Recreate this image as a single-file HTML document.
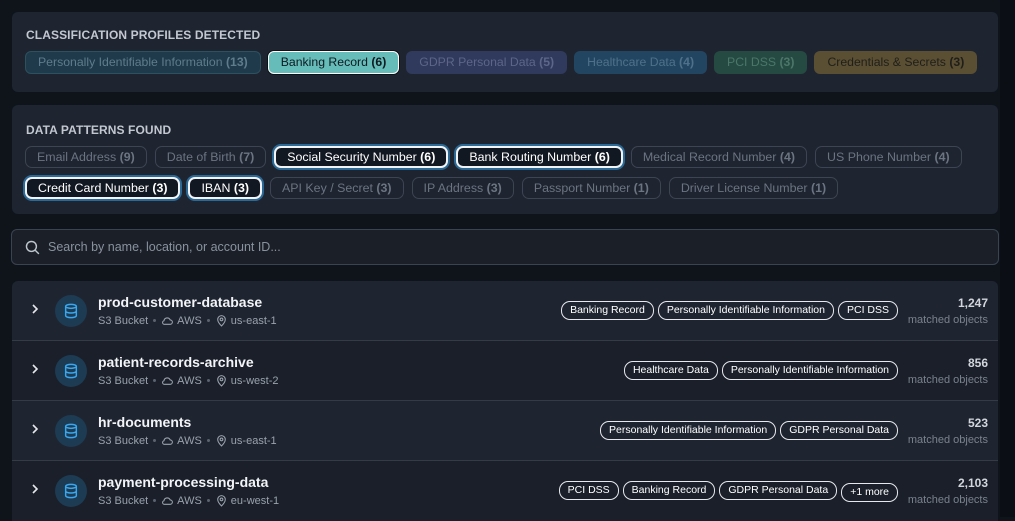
<!DOCTYPE html>
<html><head><meta charset="utf-8"><style>
*{box-sizing:border-box;margin:0;padding:0}
body{width:1015px;height:517px;overflow:hidden;background:#0f141b;font-family:"Liberation Sans",sans-serif;position:relative}
.rstrip{position:absolute;left:1000px;top:0;width:15px;height:517px;background:#0b0f15}
.panel{position:absolute;left:12px;width:986px;background:#1e2430;border-radius:6px}
.h{position:absolute;left:14px;font-size:12px;font-weight:bold;color:#c3c8d0;letter-spacing:.1px}
.chips{position:absolute;left:13px;display:flex;gap:7px;flex-wrap:wrap}
.c{height:23px;line-height:21px;padding:0 12px;border-radius:6px;font-size:12.25px;border:1px solid transparent;white-space:nowrap}
.c b{font-weight:bold}
.p{height:22px;line-height:20px;padding:0 11px;border-radius:7px;font-size:12.4px;border:1px solid #3d4452;color:#6c7482;white-space:nowrap}
.p.s{border:2px solid #f2f4f7;box-shadow:0 0 0 2px #2b6a96;background:#121821;color:#fff;line-height:18px}
.search{position:absolute;left:11px;top:229px;width:988px;height:36px;border:1px solid #3b4350;border-radius:6px;background:#1a1f28}
.search span{position:absolute;left:36px;top:10px;font-size:12.5px;color:#8a929e}
.row{position:absolute;left:12px;width:986px;height:60px;border-bottom:1px solid #343b47}
.chev{position:absolute;left:17px;top:22px}
.ic{position:absolute;left:43px;top:14px;width:32px;height:32px;border-radius:50%;background:#1d3b53}
.ic svg{position:absolute;left:8px;top:8px}
.nm{position:absolute;left:86px;top:13px;font-size:14px;font-weight:bold;color:#f2f4f7}
.mt{position:absolute;left:86px;top:33px;font-size:11px;color:#9aa2ad;display:flex;align-items:center;gap:3px}
.dot{width:3px;height:3px;background:#5b6370;border-radius:50%;margin:0 2px}
.tags{position:absolute;right:100px;top:20px;display:flex;gap:4px}
.t{height:19px;line-height:17px;padding:0 8px;border:1px solid #e6e8ec;border-radius:9px;color:#fff;font-size:10.5px;white-space:nowrap}
.cnt{position:absolute;right:10px;top:15px;text-align:right}
.cnt b{display:block;font-size:12px;color:#d2d6dc}
.cnt span{font-size:11px;color:#7a828e}
</style></head><body>
<div class="rstrip"></div>
<div class="panel" style="top:12px;height:80px">
 <div class="h" style="top:16px">CLASSIFICATION PROFILES DETECTED</div>
 <div class="chips" style="top:39px">
  <div class="c" style="background:#1f3a4b;border-color:#2c5160;color:#5e7c8c">Personally Identifiable Information <b>(13)</b></div>
  <div class="c" style="background:#66bcb8;border-color:#ffffff;color:#0f1a22;box-shadow:0 0 0 1px #0d1218">Banking Record <b>(6)</b></div>
  <div class="c" style="background:#2f3a5c;color:#5d6688">GDPR Personal Data <b>(5)</b></div>
  <div class="c" style="background:#224661;color:#50708a">Healthcare Data <b>(4)</b></div>
  <div class="c" style="background:#244a42;color:#4d7669">PCI DSS <b>(3)</b></div>
  <div class="c" style="background:#5a4e33;color:#1f1f1a">Credentials &amp; Secrets <b>(3)</b></div>
 </div>
</div>
<div class="panel" style="top:105px;height:109px">
 <div class="h" style="top:18px">DATA PATTERNS FOUND</div>
 <div class="chips" style="top:41px;width:960px;gap:9px 8px">
  <div class="p">Email Address <b>(9)</b></div>
  <div class="p">Date of Birth <b>(7)</b></div>
  <div class="p s">Social Security Number <b>(6)</b></div>
  <div class="p s">Bank Routing Number <b>(6)</b></div>
  <div class="p">Medical Record Number <b>(4)</b></div>
  <div class="p">US Phone Number <b>(4)</b></div>
  <div class="p s">Credit Card Number <b>(3)</b></div>
  <div class="p s">IBAN <b>(3)</b></div>
  <div class="p">API Key / Secret <b>(3)</b></div>
  <div class="p">IP Address <b>(3)</b></div>
  <div class="p">Passport Number <b>(1)</b></div>
  <div class="p">Driver License Number <b>(1)</b></div>
 </div>
</div>
<div class="search"><svg style="position:absolute;left:12px;top:9px" width="17" height="17" viewBox="0 0 24 24" fill="none" stroke="#c0c6ce" stroke-width="2"><circle cx="10.5" cy="10.5" r="7"/><path d="M16 16l5 5"/></svg><span>Search by name, location, or account ID...</span></div>

<div class="row" style="top:281px;background:#1f2530;border-radius:6px 6px 0 0"><svg class="chev" width="12" height="12" viewBox="0 0 12 12"><path d="M4 2l4 4-4 4" stroke="#e6e8ec" stroke-width="1.6" fill="none"/></svg><div class="ic"><svg width="16" height="16" viewBox="0 0 24 24" fill="none" stroke="#3aa8f0" stroke-width="2.2"><ellipse cx="12" cy="5" rx="8" ry="3"/><path d="M4 5v14c0 1.7 3.6 3 8 3s8-1.3 8-3V5M4 12c0 1.7 3.6 3 8 3s8-1.3 8-3"/></svg></div><div class="nm">prod-customer-database</div><div class="mt">S3 Bucket<i class="dot"></i><svg width="13" height="13" viewBox="0 0 24 24" fill="none" stroke="#9aa2ad" stroke-width="2"><path d="M7 19h10a4 4 0 0 0 0-8 6 6 0 0 0-11.5 1.5A3.3 3.3 0 0 0 7 19z"/></svg>AWS<i class="dot"></i><svg width="13" height="13" viewBox="0 0 24 24" fill="none" stroke="#9aa2ad" stroke-width="2"><path d="M12 22s7-6.5 7-12a7 7 0 0 0-14 0c0 5.5 7 12 7 12z"/><circle cx="12" cy="10" r="2.5"/></svg>us-east-1</div><div class="tags"><span class="t">Banking Record</span><span class="t">Personally Identifiable Information</span><span class="t">PCI DSS</span></div><div class="cnt"><b>1,247</b><span>matched objects</span></div></div>

<div class="row" style="top:341px;background:#1a1f29"><svg class="chev" width="12" height="12" viewBox="0 0 12 12"><path d="M4 2l4 4-4 4" stroke="#e6e8ec" stroke-width="1.6" fill="none"/></svg><div class="ic"><svg width="16" height="16" viewBox="0 0 24 24" fill="none" stroke="#3aa8f0" stroke-width="2.2"><ellipse cx="12" cy="5" rx="8" ry="3"/><path d="M4 5v14c0 1.7 3.6 3 8 3s8-1.3 8-3V5M4 12c0 1.7 3.6 3 8 3s8-1.3 8-3"/></svg></div><div class="nm">patient-records-archive</div><div class="mt">S3 Bucket<i class="dot"></i><svg width="13" height="13" viewBox="0 0 24 24" fill="none" stroke="#9aa2ad" stroke-width="2"><path d="M7 19h10a4 4 0 0 0 0-8 6 6 0 0 0-11.5 1.5A3.3 3.3 0 0 0 7 19z"/></svg>AWS<i class="dot"></i><svg width="13" height="13" viewBox="0 0 24 24" fill="none" stroke="#9aa2ad" stroke-width="2"><path d="M12 22s7-6.5 7-12a7 7 0 0 0-14 0c0 5.5 7 12 7 12z"/><circle cx="12" cy="10" r="2.5"/></svg>us-west-2</div><div class="tags"><span class="t">Healthcare Data</span><span class="t">Personally Identifiable Information</span></div><div class="cnt"><b>856</b><span>matched objects</span></div></div>

<div class="row" style="top:401px;background:#1f2530"><svg class="chev" width="12" height="12" viewBox="0 0 12 12"><path d="M4 2l4 4-4 4" stroke="#e6e8ec" stroke-width="1.6" fill="none"/></svg><div class="ic"><svg width="16" height="16" viewBox="0 0 24 24" fill="none" stroke="#3aa8f0" stroke-width="2.2"><ellipse cx="12" cy="5" rx="8" ry="3"/><path d="M4 5v14c0 1.7 3.6 3 8 3s8-1.3 8-3V5M4 12c0 1.7 3.6 3 8 3s8-1.3 8-3"/></svg></div><div class="nm">hr-documents</div><div class="mt">S3 Bucket<i class="dot"></i><svg width="13" height="13" viewBox="0 0 24 24" fill="none" stroke="#9aa2ad" stroke-width="2"><path d="M7 19h10a4 4 0 0 0 0-8 6 6 0 0 0-11.5 1.5A3.3 3.3 0 0 0 7 19z"/></svg>AWS<i class="dot"></i><svg width="13" height="13" viewBox="0 0 24 24" fill="none" stroke="#9aa2ad" stroke-width="2"><path d="M12 22s7-6.5 7-12a7 7 0 0 0-14 0c0 5.5 7 12 7 12z"/><circle cx="12" cy="10" r="2.5"/></svg>us-east-1</div><div class="tags"><span class="t">Personally Identifiable Information</span><span class="t">GDPR Personal Data</span></div><div class="cnt"><b>523</b><span>matched objects</span></div></div>

<div class="row" style="top:461px;background:#1a1f29;border-bottom:none"><svg class="chev" width="12" height="12" viewBox="0 0 12 12"><path d="M4 2l4 4-4 4" stroke="#e6e8ec" stroke-width="1.6" fill="none"/></svg><div class="ic"><svg width="16" height="16" viewBox="0 0 24 24" fill="none" stroke="#3aa8f0" stroke-width="2.2"><ellipse cx="12" cy="5" rx="8" ry="3"/><path d="M4 5v14c0 1.7 3.6 3 8 3s8-1.3 8-3V5M4 12c0 1.7 3.6 3 8 3s8-1.3 8-3"/></svg></div><div class="nm">payment-processing-data</div><div class="mt">S3 Bucket<i class="dot"></i><svg width="13" height="13" viewBox="0 0 24 24" fill="none" stroke="#9aa2ad" stroke-width="2"><path d="M7 19h10a4 4 0 0 0 0-8 6 6 0 0 0-11.5 1.5A3.3 3.3 0 0 0 7 19z"/></svg>AWS<i class="dot"></i><svg width="13" height="13" viewBox="0 0 24 24" fill="none" stroke="#9aa2ad" stroke-width="2"><path d="M12 22s7-6.5 7-12a7 7 0 0 0-14 0c0 5.5 7 12 7 12z"/><circle cx="12" cy="10" r="2.5"/></svg>eu-west-1</div><div class="tags"><span class="t">PCI DSS</span><span class="t">Banking Record</span><span class="t">GDPR Personal Data</span><span class="t" style="margin-top:2px">+1 more</span></div><div class="cnt"><b>2,103</b><span>matched objects</span></div></div>
</body></html>
